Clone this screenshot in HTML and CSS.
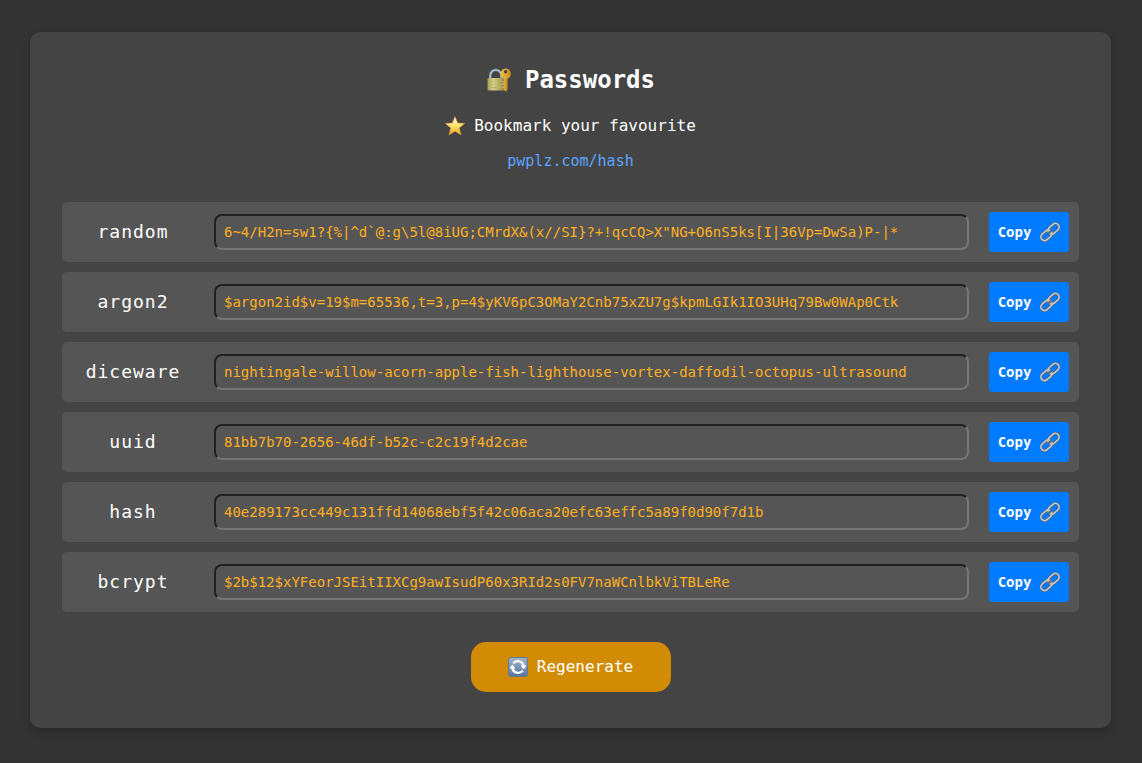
FILE: index.html
```
<!DOCTYPE html>
<html lang="en">
<head>
<meta charset="utf-8">
<meta name="viewport" content="width=device-width, initial-scale=1">
<title>Passwords</title>
<link rel="stylesheet" href="styles.css">
</head>
<body>
<svg class="defs" aria-hidden="true">
  <defs>
    <symbol id="link" viewBox="0 0 20 20">
      <g fill="none" transform="rotate(-42 10 10)">
        <g stroke="#545c66" stroke-width="2.8"><rect x="-1" y="6.300" width="12.400" height="7.400" rx="3.700"/><rect x="8.600" y="6.300" width="12.400" height="7.400" rx="3.700"/></g>
        <rect x="-1" y="6.300" width="12.400" height="7.400" rx="3.700" stroke="#c3c8cd" stroke-width="1.700"/>
        <rect x="8.600" y="6.300" width="12.400" height="7.400" rx="3.700" stroke="#c3c8cd" stroke-width="1.700"/>
        <path d="M8.700 9v2M11.300 9v2" stroke="#545c66" stroke-width="1.600"/>
      </g>
    </symbol>
  </defs>
</svg>
<main class="card">
  <h1 class="title">
    <svg class="icon-lock" viewBox="0 0 26 26" aria-hidden="true">
      <defs>
        <linearGradient id="brass" x1="0" x2="1"><stop offset="0" stop-color="#a49e4e"/><stop offset=".35" stop-color="#d6d08c"/><stop offset="1" stop-color="#96893c"/></linearGradient>
        <linearGradient id="gold" x1="0" x2="1"><stop offset="0" stop-color="#f1bd45"/><stop offset="1" stop-color="#cf8d18"/></linearGradient>
      </defs>
      <path d="M4.300 13V8.500a5.500 5.500 0 0 1 11 0V13" fill="none" stroke="#64717e" stroke-width="2.800"/>
      <path d="M4.300 13V8.500a5.500 5.500 0 0 1 11 0V13" fill="none" stroke="#b5c4d1" stroke-width="1.600"/>
      <rect x="1.500" y="11" width="17" height="12.500" rx="1.200" fill="url(#brass)"/>
      <path d="M2 14.500h16M2 17.500h16M2 20.500h16" stroke="#b8b16a" stroke-width=".7"/>
      <path fill="url(#gold)" fill-rule="evenodd" d="M19.500 1.500a5.300 5.300 0 0 1 2 10.200V22.500L20 24.500 18 23V21l-1.400-1 1.400-1v-1.500l-1.400-1 1.400-1v-3.800A5.300 5.300 0 0 1 19.500 1.500zM19.600 3a1.700 1.700 0 1 0 0 3.400 1.700 1.700 0 0 0 0-3.400z"/>
      <path d="M20 12.500v10.500" stroke="#b97c16" stroke-width=".7"/>
    </svg>
    <span>Passwords</span>
  </h1>
  <p class="tagline">
    <svg class="icon-star" viewBox="0 0 20 20" aria-hidden="true">
      <defs><linearGradient id="star" x1="0" y1="0" x2="0" y2="1"><stop offset="0" stop-color="#fffbe0"/><stop offset=".5" stop-color="#ffe370"/><stop offset="1" stop-color="#f1a51c"/></linearGradient></defs>
      <path d="M10 .6l2.600 6.400 7 .4-5.400 4.500 1.900 7L10 15.200l-6.100 3.700 1.900-7L.4 7.400l7-.4z" fill="url(#star)" stroke="#e3a02c" stroke-width=".5" stroke-linejoin="round"/>
    </svg>
    <span>Bookmark your favourite</span>
  </p>
  <a class="bookmark" href="#hash">pwplz.com/hash</a>

  <div class="rows">
    <div class="row">
      <label class="name" for="random">random</label>
      <input class="value" id="random" type="text" readonly value="6~4/H2n=sw1?{%|^d`@:g\5l@8iUG;CMrdX&amp;(x//SI}?+!qcCQ&gt;X&quot;NG+O6nS5ks[I|36Vp=DwSa)P-|*">
      <button class="copy" type="button">Copy <svg class="icon-link" aria-hidden="true"><use href="#link"/></svg></button>
    </div>
    <div class="row">
      <label class="name" for="argon2">argon2</label>
      <input class="value" id="argon2" type="text" readonly value="$argon2id$v=19$m=65536,t=3,p=4$yKV6pC3OMaY2Cnb75xZU7g$kpmLGIk1IO3UHq79Bw0WAp0Ctk">
      <button class="copy" type="button">Copy <svg class="icon-link" aria-hidden="true"><use href="#link"/></svg></button>
    </div>
    <div class="row">
      <label class="name" for="diceware">diceware</label>
      <input class="value" id="diceware" type="text" readonly value="nightingale-willow-acorn-apple-fish-lighthouse-vortex-daffodil-octopus-ultrasound">
      <button class="copy" type="button">Copy <svg class="icon-link" aria-hidden="true"><use href="#link"/></svg></button>
    </div>
    <div class="row">
      <label class="name" for="uuid">uuid</label>
      <input class="value" id="uuid" type="text" readonly value="81bb7b70-2656-46df-b52c-c2c19f4d2cae">
      <button class="copy" type="button">Copy <svg class="icon-link" aria-hidden="true"><use href="#link"/></svg></button>
    </div>
    <div class="row">
      <label class="name" for="hash">hash</label>
      <input class="value" id="hash" type="text" readonly value="40e289173cc449c131ffd14068ebf5f42c06aca20efc63effc5a89f0d90f7d1b">
      <button class="copy" type="button">Copy <svg class="icon-link" aria-hidden="true"><use href="#link"/></svg></button>
    </div>
    <div class="row">
      <label class="name" for="bcrypt">bcrypt</label>
      <input class="value" id="bcrypt" type="text" readonly value="$2b$12$xYFeorJSEitIIXCg9awIsudP60x3RId2s0FV7naWCnlbkViTBLeRe">
      <button class="copy" type="button">Copy <svg class="icon-link" aria-hidden="true"><use href="#link"/></svg></button>
    </div>
  </div>

  <button class="regenerate" type="button">
    <svg class="icon-refresh" viewBox="0 0 20 20" aria-hidden="true">
      <defs><linearGradient id="tile" x1="0" y1="0" x2="0" y2="1"><stop offset="0" stop-color="#a3b5c8"/><stop offset="1" stop-color="#55779f"/></linearGradient></defs>
      <rect x=".5" y=".5" width="19" height="19" rx="2.500" fill="url(#tile)" stroke="#657b92"/>
      <g fill="none" stroke="#fff" stroke-width="2.200"><path d="M5.200 6.400a6 6 0 0 1 10.500 2.200"/><path d="M14.800 13.600A6 6 0 0 1 4.300 11.400"/></g>
      <path fill="#fff" d="M12.500 8.500h6l-2.800 4zM7.500 11.500h-6l2.800-4z"/>
    </svg>
    <span>Regenerate</span>
  </button>
</main>
</body>
</html>
```
FILE: styles.css
```
* {
  box-sizing: border-box;
}

body {
  margin: 0;
  padding: 32px 31px 32px 30px;
  background: #333;
  color: #fff;
  font: 16px/20px "DejaVu Sans Mono", monospace;
}

.defs {
  position: absolute;
  width: 0;
  height: 0;
}

.card {
  display: flex;
  flex-direction: column;
  align-items: center;
  padding: 32px 32px 36px;
  border-radius: 10px;
  background: #444;
  box-shadow: 0 4px 8px rgba(0, 0, 0, 0.2);
}

.title {
  display: flex;
  align-items: center;
  gap: 13px;
  margin: 0 0 20px;
  font-size: 24px;
  line-height: 32px;
}

.icon-lock {
  width: 26px;
  height: 26px;
}

.tagline {
  display: flex;
  align-items: center;
  gap: 9px;
  margin: 0 0 15px;
}

.icon-star,
.icon-refresh {
  width: 20px;
  height: 20px;
}

.bookmark {
  margin-bottom: 31px;
  color: #5aa5ff;
  font-size: 15px;
  text-decoration: none;
}

.rows {
  display: flex;
  flex-direction: column;
  align-self: stretch;
  gap: 10px;
  margin-bottom: 30px;
}

.row {
  display: flex;
  align-items: center;
  gap: 20px;
  padding: 10px;
  border-radius: 5px;
  background: #555;
}

.name {
  flex: none;
  width: 122px;
  font-size: 18px;
  letter-spacing: 1px;
  text-align: center;
}

.value {
  flex: 1;
  min-width: 0;
  height: 36px;
  padding: 0 8px;
  border: 2px inset #767676;
  border-radius: 8px;
  background: #555;
  color: #ffb020;
  font: inherit;
  font-size: 14px;
}

.copy {
  display: flex;
  align-items: center;
  justify-content: center;
  gap: 9px;
  width: 80px;
  height: 40px;
  padding: 0;
  border: 0;
  border-radius: 3px;
  background: #007bff;
  color: #fff;
  font: inherit;
  font-size: 14px;
  font-weight: bold;
  cursor: pointer;
}

.icon-link {
  width: 20px;
  height: 20px;
}

.regenerate {
  display: flex;
  align-items: center;
  justify-content: center;
  gap: 9px;
  width: 200px;
  height: 50px;
  padding: 0;
  border: 0;
  border-radius: 15px;
  background: #d18b05;
  color: #fff;
  font: inherit;
  cursor: pointer;
}
```
